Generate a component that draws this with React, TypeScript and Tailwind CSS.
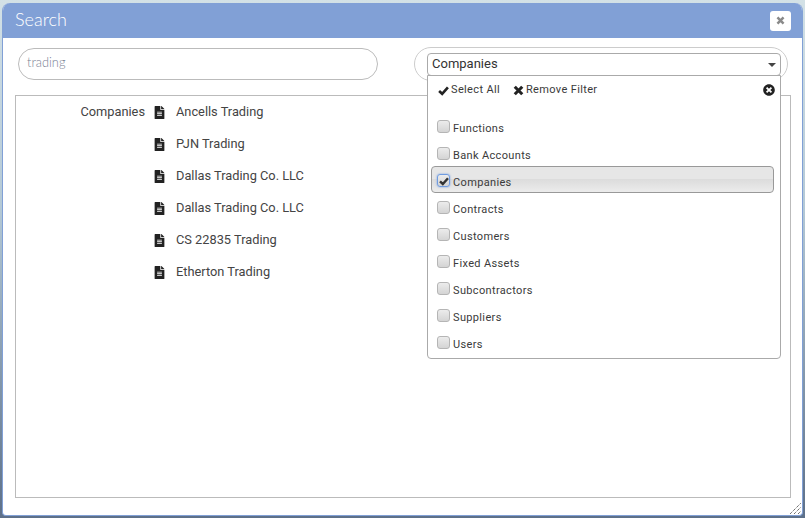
import { FaFileAlt, FaTimesCircle } from "react-icons/fa";

const results = [
  "Ancells Trading",
  "PJN Trading",
  "Dallas Trading Co. LLC",
  "Dallas Trading Co. LLC",
  "CS 22835 Trading",
  "Etherton Trading",
];

const filters = [
  "Functions",
  "Bank Accounts",
  "Companies",
  "Contracts",
  "Customers",
  "Fixed Assets",
  "Subcontractors",
  "Suppliers",
  "Users",
];

// heavy glyphicon style marks, the icon packs only have thinner ones
const BoldX = ({ size, className }: { size: number; className?: string }) => (
  <svg width={size} height={size} viewBox="0 0 10 10" className={className}>
    <path d="M1.6 1.6 8.4 8.4M8.4 1.6 1.6 8.4" stroke="currentColor" strokeWidth="2.8" fill="none" />
  </svg>
);

const BoldCheck = ({ size, className }: { size: number; className?: string }) => (
  <svg width={size} height={size} viewBox="0 0 10 10" className={className}>
    <path d="M1 5.4 3.8 8 9 2.2" stroke="currentColor" strokeWidth="2.4" fill="none" />
  </svg>
);

const Checkbox = ({ checked }: { checked?: boolean }) => (
  <span
    className={`flex h-[13px] w-[13px] shrink-0 items-center justify-center rounded-[3px] border bg-gradient-to-b from-[#ececec] to-[#d4d4d4] ${
      checked ? "border-[#6f9be0] shadow-[0_0_2px_#6f9be0]" : "border-[#b5b5b5]"
    }`}
  >
    {checked && <BoldCheck size={10} className="text-[#333]" />}
  </span>
);

const FilterRow = ({ label }: { label: string }) => {
  const active = label === "Companies";
  return (
    <div
      className={`ml-[3px] mr-[6px] flex h-[27px] items-center gap-[3px] rounded-[4px] border pl-[5px] ${
        active
          ? "border-[#999] bg-[linear-gradient(#e6e6e6_0%,#e6e6e6_50%,#dcdcdc_50%,#ececec_100%)]"
          : "border-transparent"
      }`}
    >
      <div className="mt-[2px]">
        <Checkbox checked={active} />
      </div>
      <span className="mt-[8px]">{label}</span>
    </div>
  );
};

export default function App() {
  return (
    <div className="h-[518px] w-[805px] overflow-hidden bg-[linear-gradient(180deg,#d3e1e6_0%,#b4c9d6_40%,#5d7089_100%)] pl-[2px] pt-[3px]">
      <div className="relative flex h-[513px] w-[801px] flex-col overflow-hidden rounded-t-[8px] rounded-b-[4px] border-x border-b border-[#81a0d6] bg-white [font-family:Roboto,sans-serif]">
        {/* header */}
        <div className="flex h-[35px] shrink-0 items-center justify-between bg-[#81a0d6] pl-[12px] pr-[11px]">
          <span className="-mt-[2px] text-[18px] font-light text-white [font-family:Lato,sans-serif]">
            Search
          </span>
          <button className="flex h-[20px] w-[21px] items-center justify-center rounded-[3px] bg-white text-[#8a8a8a]">
            <BoldX size={9} />
          </button>
        </div>

        {/* search inputs */}
        <div className="flex h-[57px] shrink-0 items-start pl-[15px] pr-[14px] pt-[9px]">
          <div className="mt-[1px] flex h-[32px] w-[360px] items-center rounded-full border border-[#bbb] pb-[2px] pl-[8px] text-[12.8px] font-light text-[#7a7f95] [font-family:Lato,sans-serif]">
            trading
          </div>
          <div className="ml-[36px] flex h-[34px] w-[374px] items-start rounded-full border border-[#ccc] pl-[12px] pt-[5px]">
            <div className="flex h-[23px] w-[354px] items-center justify-between rounded-[4px] border border-[#aaa] pb-[1px] pl-[4px] pr-[4px] text-[13px] text-[#333]">
              Companies
              <span className="mt-[1px] h-0 w-0 border-x-[4px] border-t-[4px] border-x-transparent border-t-[#444]" />
            </div>
          </div>
        </div>

        {/* results */}
        <div className="mb-[17px] ml-[12px] mr-[11px] flex-1 border border-[#bbb] text-[12.8px] text-[#444]">
          {results.map((name, i) => (
            <div key={i} className="flex h-[32px] items-center">
              <span className="w-[129px] text-right">{i === 0 ? "Companies" : ""}</span>
              <FaFileAlt size={13} className="ml-[8px] text-[#222]" />
              <span className="ml-[10px]">{name}</span>
            </div>
          ))}
        </div>

        {/* filter dropdown */}
        <div className="absolute left-[424px] top-[72px] h-[284px] w-[354px] rounded-b-[4px] border border-[#aaa] bg-white text-[11px] tracking-[0.35px] text-[#3a3a3a]">
          <div className="relative flex h-[36px] items-start pl-[10px] pt-[6px]">
            <span className="flex items-center gap-[2px]">
              <BoldCheck size={11} className="text-[#222]" />
              Select All
            </span>
            <span className="ml-[13px] flex items-center gap-[2px]">
              <BoldX size={11} className="text-[#222]" />
              Remove Filter
            </span>
            <FaTimesCircle size={12} className="absolute right-[5px] top-[8px] text-[#222]" />
          </div>
          {filters.map((f) => (
            <FilterRow key={f} label={f} />
          ))}
        </div>

        {/* resize handle */}
        <svg width="11" height="11" viewBox="0 0 11 11" className="absolute bottom-[1px] right-[1px] text-[#333]">
          <path d="M0 11 11 0M4 11 11 4M8 11 11 8" stroke="currentColor" strokeDasharray="1 1" fill="none" />
        </svg>
      </div>
    </div>
  );
}
